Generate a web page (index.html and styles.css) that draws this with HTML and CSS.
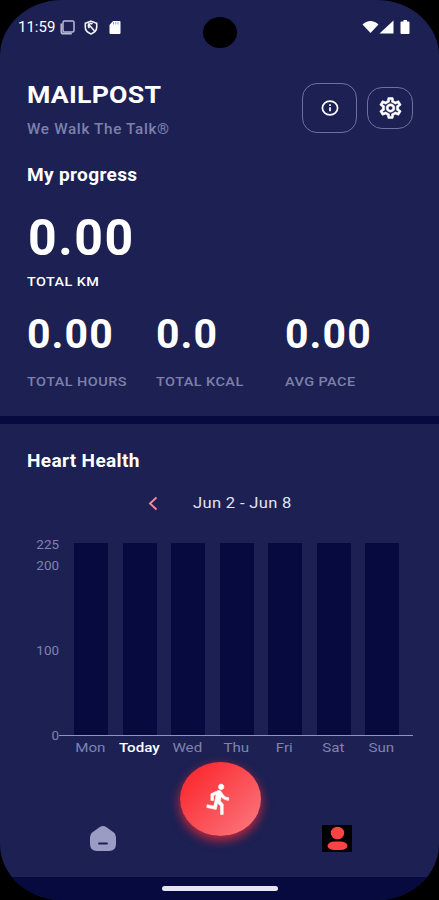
FILE: index.html
```
<!DOCTYPE html>
<html lang="en">
<head>
    <meta charset="UTF-8">
    <meta name="viewport" content="width=device-width, initial-scale=1.0">
    <title>Mailpost</title>
    <link rel="stylesheet" href="styles.css">
</head>
<body>

<div class="phone">
    <div class="camera"></div>

    <div class="status-bar">
        <span class="clock">11:59</span>
        <svg class="status-icon" width="15" height="15" viewBox="0 0 15 15" fill="none" stroke="#b9bad6">
            <rect x="3" y="1" width="11" height="11" rx="1.5" stroke-width="1.5"/>
            <path d="M1.300 3.500v8.200a2 2 0 0 0 2 2h8.500" stroke-width="1.7"/>
        </svg>
        <svg class="status-icon shield" width="14" height="15" viewBox="0 0 14 15" fill="none" stroke="#f0f0f8" stroke-width="1.6">
            <path d="M7 1.200L12.700 3.200v4c0 3-2.400 5.400-5.700 6.700C3.700 12.600 1.300 10.200 1.300 7.200v-4z"/>
            <path d="M4 3.500L10.500 11M5.500 8a2.500 2.500 0 0 1 3-4"/>
        </svg>
        <svg class="status-icon sdcard" width="12" height="15" viewBox="0 0 12 15">
            <path d="M4 1h6.500a1 1 0 0 1 1 1v11a1 1 0 0 1-1 1h-9a1 1 0 0 1-1-1V5z" fill="#fff"/>
            <path d="M4.500 2v2.500M6.800 2v2.500M9 2v2.500" stroke="#9a9cc0" stroke-width="1"/>
        </svg>
        <span class="spacer"></span>
        <svg width="49" height="15" viewBox="0 0 49 15" fill="#fff">
            <path d="M.5 4.500C5-.2 12-.2 16.500 4.500L8.500 13z"/>
            <path d="M31.500.5v13h-14z"/>
            <path d="M41.500 0h3.500v1.500h1.500a1 1 0 0 1 1 1V13a1 1 0 0 1-1 1h-7a1 1 0 0 1-1-1V2.500a1 1 0 0 1 1-1h2z"/>
        </svg>
    </div>

    <div class="header">
        <div class="brand">
            <h1>MAILPOST</h1>
            <p>We Walk The Talk®</p>
        </div>
        <button class="icon-button info" aria-label="Info">
            <svg width="18" height="16" viewBox="0 0 18 16" fill="none" stroke="#fff">
                <ellipse cx="9" cy="8" rx="7.600" ry="6.900" stroke-width="1.7"/>
                <path d="M9 7.200v4M9 4.300v1.600" stroke-width="1.7"/>
            </svg>
        </button>
        <button class="icon-button settings" aria-label="Settings">
            <svg width="23" height="22" viewBox="1.500 1.500 21 21" preserveAspectRatio="none" fill="#fff">
                <path d="M19.430 12.980c.04-.32.07-.64.07-.98s-.03-.66-.07-.98l2.110-1.650c.19-.15.24-.42.12-.64l-2-3.460c-.09-.16-.26-.25-.44-.25-.06 0-.12.01-.17.03l-2.490 1c-.52-.4-1.080-.73-1.690-.98l-.38-2.650C14.460 2.180 14.250 2 14 2h-4c-.25 0-.46.18-.49.42l-.38 2.650c-.61.25-1.170.59-1.690.98l-2.490-1c-.06-.02-.12-.03-.18-.03-.17 0-.34.09-.43.25l-2 3.460c-.13.22-.07.49.12.64l2.110 1.650c-.04.32-.07.65-.07.98s.03.66.07.98l-2.110 1.650c-.19.15-.24.42-.12.64l2 3.460c.09.16.26.25.44.25.06 0 .12-.01.17-.03l2.490-1c.52.4 1.080.73 1.690.98l.38 2.650c.03.24.24.42.49.42h4c.25 0 .46-.18.49-.42l.38-2.650c.61-.25 1.170-.59 1.690-.98l2.490 1c.06.02.12.03.18.03.17 0 .34-.09.43-.25l2-3.460c.12-.22.07-.49-.12-.64l-2.110-1.650zm-1.980-1.710c.04.31.05.52.05.73s-.02.43-.05.73l-.14 1.130.89.7 1.080.84-.7 1.210-1.270-.51-1.040-.42-.9.68c-.43.32-.84.56-1.250.73l-1.060.43-.16 1.130-.2 1.350h-1.400l-.19-1.350-.16-1.130-1.060-.43c-.43-.18-.83-.41-1.230-.71l-.91-.7-1.060.43-1.270.51-.7-1.210 1.080-.84.89-.7-.14-1.130c-.03-.31-.05-.54-.05-.74s.02-.43.05-.73l.14-1.130-.89-.7-1.080-.84.7-1.210 1.270.51 1.040.42.9-.68c.43-.32.84-.56 1.250-.73l1.060-.43.16-1.130.2-1.350h1.390l.19 1.350.16 1.130 1.060.43c.43.18.83.41 1.230.71l.91.7 1.060-.43 1.270-.51.7 1.210-1.070.85-.89.7.14 1.130zM12 8c-2.210 0-4 1.790-4 4s1.790 4 4 4 4-1.790 4-4-1.790-4-4-4zm0 6c-1.100 0-2-.9-2-2s.9-2 2-2 2 .9 2 2-.9 2-2 2z" stroke="#fff" stroke-width=".5"/>
            </svg>
        </button>
    </div>

    <div class="progress">
        <h2>My progress</h2>
        <div class="total">0.00</div>
        <div class="total-label">TOTAL KM</div>
        <div class="stats">
            <div class="stat"><b>0.00</b><span>TOTAL HOURS</span></div>
            <div class="stat"><b>0.0</b><span>TOTAL KCAL</span></div>
            <div class="stat"><b>0.00</b><span>AVG PACE</span></div>
        </div>
    </div>

    <div class="heart">
        <h2>Heart Health</h2>
        <div class="week">
            <svg width="10" height="15" viewBox="0 0 10 15" fill="none" stroke="#f08a9b" stroke-width="1.9">
                <path d="M8.500 1.500L2 7.500l6.500 6"/>
            </svg>
            <span>Jun 2 - Jun 8</span>
        </div>
        <div class="chart">
            <div class="axis">
                <span class="max">225</span>
                <span class="upper">200</span>
                <span class="middle">100</span>
                <span class="zero">0</span>
            </div>
            <div class="plot">
                <div class="bars">
                    <i></i><i></i><i></i><i></i><i></i><i></i><i></i>
                </div>
                <div class="days">
                    <span>Mon</span>
                    <span class="today">Today</span>
                    <span>Wed</span>
                    <span>Thu</span>
                    <span>Fri</span>
                    <span>Sat</span>
                    <span>Sun</span>
                </div>
            </div>
        </div>
    </div>

    <div class="tab-bar">
        <svg class="home" width="28" height="27" viewBox="0 0 28 27">
            <path d="M10.500 2.200Q14 0 17.500 2.200L24.500 7.200Q27 9 27 12v7q0 7-7 7H8q-7 0-7-7v-7q0-3 2.500-4.800z" fill="#9b9cc4"/>
            <path d="M10 18.500h8" stroke="#1c2056" stroke-width="1.8" stroke-linecap="round"/>
        </svg>
        <button class="run" aria-label="Start run">
            <svg width="33" height="34" viewBox="1 0 24 24" preserveAspectRatio="none" fill="#fff">
                <path d="M13.490 5.480c1.100 0 2-.9 2-2s-.9-2-2-2-2 .9-2 2 .9 2 2 2zm-3.600 13.900l1-4.400 2.100 2v6h2v-7.500l-2.100-2 .6-3c1.300 1.500 3.300 2.500 5.500 2.500v-2c-1.900 0-3.500-1-4.300-2.400l-1-1.600c-.4-.6-1-1-1.700-1-.3 0-.5.1-.8.1l-5.200 2.200v4.700h2v-3.400l1.800-.7-1.600 8.100-4.900-1-.4 2 7 1.400z" stroke="#fff" stroke-width=".4"/>
            </svg>
        </button>
        <svg class="profile" width="30" height="27" viewBox="0 0 30 27">
            <path d="M0 0h30v27H0z" fill="#000"/>
            <g fill="#fb4244">
                <ellipse cx="15.500" cy="8" rx="6.700" ry="6.300"/>
                <rect x="5.500" y="16.500" width="20" height="8.500" rx="7" ry="4.250"/>
            </g>
        </svg>
    </div>

    <div class="nav-bar"><div class="handle"></div></div>
</div>

</body>
</html>
```
FILE: styles.css
```
/* Global Styles */
* {
    box-sizing: border-box;
}

body {
    font-family: Roboto, sans-serif;
    background: #000;
    margin: 0;
    color: white;
}

h1, h2, p {
    margin: 0;
}

.phone {
    position: relative;
    display: flex;
    flex-direction: column;
    width: 439px;
    height: 900px;
    overflow: hidden;
    background: #1c2053;
    border-radius: 62px / 56px;
}

.camera {
    position: absolute;
    left: 203px;
    top: 17px;
    width: 34px;
    height: 31px;
    border-radius: 50%;
    background: #000;
}

/* Wide lettering */
h1, h2, .brand p, .total-label, .stat span, .week span {
    transform: scaleX(1.09);
    transform-origin: left;
}

/* Status bar */
.status-bar {
    display: flex;
    align-items: center;
    height: 54px;
    padding: 0 28px 0 18px;
}

.clock {
    width: 42px;
    font-size: 15px;
    line-height: 54px;
}

.shield {
    margin-left: 9px;
}

.sdcard {
    margin-left: 11px;
}

.spacer {
    flex: 1;
}

/* Header */
.header {
    display: flex;
    align-items: center;
    height: 108px;
    padding: 0 26px 0 27px;
}

.brand {
    width: 180px;
    height: 56px;
    margin-right: auto;
    padding-top: 2px;
}

h1 {
    font-size: 24.5px;
    line-height: 26px;
    letter-spacing: 0.2px;
}

.brand p {
    margin-top: 12px;
    font-size: 14px;
    line-height: 18px;
    font-weight: 500;
    letter-spacing: 0.6px;
    color: #7d80ab;
}

.icon-button {
    display: flex;
    align-items: center;
    justify-content: center;
    padding: 0;
    background: none;
    border: 1px solid #6d70a0;
}

.info {
    width: 55px;
    height: 50px;
    margin-right: 10px;
    border-radius: 15px;
}

.settings {
    width: 46px;
    height: 42px;
    border-radius: 15px;
}

/* Progress */
.progress {
    height: 254px;
    padding: 2px 27px 0;
}

h2 {
    font-size: 17.5px;
    line-height: 22px;
    font-weight: 700;
    letter-spacing: 0.3px;
}

.total {
    margin: 22px 0 0 1px;
    font-size: 50px;
    line-height: 60px;
    font-weight: 700;
    letter-spacing: 1.5px;
}

.total-label {
    margin-top: 5px;
    font-size: 13.2px;
    line-height: 18px;
    font-weight: 500;
    letter-spacing: 0.4px;
}

.stats {
    display: grid;
    grid-template-columns: 129px 129px 1fr;
    margin-top: 18px;
}

.stat b {
    display: block;
    font-size: 41px;
    line-height: 50px;
    letter-spacing: 1.1px;
}

.stat span {
    display: block;
    margin-top: 14px;
    font-size: 13.3px;
    line-height: 18px;
    font-weight: 500;
    letter-spacing: 0.4px;
    white-space: nowrap;
    color: #7d80ab;
}

/* Heart Health */
.heart {
    height: 347px;
    padding-top: 26px;
    border-top: 8px solid #060a3e;
}

.heart h2 {
    margin-left: 27px;
}

.week {
    display: flex;
    align-items: center;
    height: 24px;
    margin-top: 19px;
    padding-left: 148px;
    font-size: 15.2px;
    letter-spacing: 0.3px;
    color: #e2e3f0;
}

.week span {
    margin-left: 35px;
}

.chart {
    display: flex;
    margin-top: 28px;
    padding-right: 26px;
}

.axis {
    display: flex;
    flex-direction: column;
    width: 59px;
    font-size: 12px;
    line-height: 14px;
    text-align: right;
    color: #8083ae;
}

.axis span {
    transform: scaleX(1.12);
    transform-origin: right;
}

.max {
    margin-top: -5px;
}

.upper {
    margin-top: 7px;
}

.middle {
    margin-top: 71px;
}

.zero {
    margin-top: 71px;
}

.plot {
    flex: 1;
}

.bars {
    display: flex;
    justify-content: space-between;
    height: 193px;
    padding: 0 14px 0 15px;
    border-bottom: 1px solid #9093bd;
}

.bars i {
    width: 34px;
    background: #060a3e;
}

.days {
    display: flex;
    padding: 1px 7px 0;
    font-size: 13.5px;
    line-height: 20px;
    color: #8083ae;
}

.days span {
    flex: 1 1 0;
    width: 0;
    display: flex;
    justify-content: center;
    transform: scaleX(1.12);
}

.days .today {
    color: #fff;
    font-weight: 500;
}

/* Bottom tabs */
.tab-bar {
    display: flex;
    height: 114px;
    padding-left: 89px;
}

.home {
    margin-top: 62px;
}

.run {
    display: flex;
    align-items: center;
    justify-content: center;
    width: 81px;
    height: 74px;
    margin: -1px 0 0 63px;
    padding: 0;
    border: none;
    border-radius: 50%;
    background: linear-gradient(135deg, #fb3037 20%, #fb7c82 100%);
    box-shadow: 0 4px 11px rgba(251, 44, 52, 0.8);
}

.profile {
    margin: 62px 0 0 61px;
}

.nav-bar {
    display: flex;
    justify-content: center;
    height: 23px;
    padding-top: 9px;
    background: #060a3e;
}

.handle {
    width: 116px;
    height: 5px;
    border-radius: 3px;
    background: #e6e4ee;
}
```
